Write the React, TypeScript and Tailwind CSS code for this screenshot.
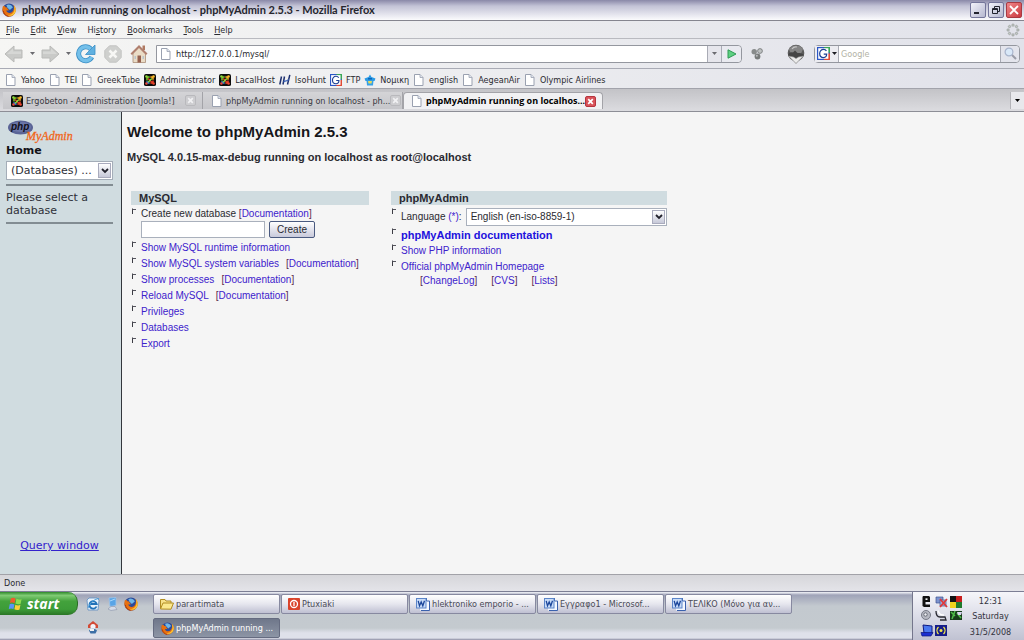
import type { ReactNode } from "react";

/* ---------- icons ---------- */

function Firefox({ className }: { className: string }) {
  return (
    <svg viewBox="0 0 16 16" className={className} aria-hidden="true">
      <circle cx="8" cy="8" r="7.500" fill="#2b4a9a" />
      <path d="M5 2.200a6 6 0 0 1 7.500 2.600L9 8 6 5z" fill="#6fb6e6" />
      <path
        d="M1.200 3C.1 6 0 9.500 2 12.400 4 15.300 7.500 16.200 10.500 15.200 14.500 13.800 16.500 9.500 15.300 5.500 14.900 4 14.100 3 13.200 2.300 14 4.600 13.600 6.200 13.300 7.400 12.600 10 10.500 11.600 8.200 11.400 6 11.200 4.800 9.800 5 8.400c.8.500 2.200.3 3-.4L6.300 6.600 5.900 5 4 4.800 3 3.200 2.400 4z"
        fill="#e8700f"
      />
      <path d="M13.200 2.300c1.300 2.400 1.600 6-.2 8.600-1.700 2.500-4.800 3.300-7.300 2.300 3.500 3 9.300.9 10-4.200.3-2.500-.7-5.200-2.500-6.700z" fill="#fbc534" />
      <path d="M1.500 9c.5 3 2.800 5.800 6 6.400" stroke="#a93208" strokeWidth="1" fill="none" />
    </svg>
  );
}

function Joomla() {
  return (
    <svg viewBox="0 0 16 16" className="size-3 shrink-0" aria-hidden="true">
      <rect width="16" height="16" rx="2.500" fill="#0c0c0c" />
      <path d="M4 8.500V5.500L5.500 4h2" stroke="#7ccb2c" strokeWidth="2" fill="none" />
      <path d="M8.500 4h2L12 5.500v2" stroke="#fbae25" strokeWidth="2" fill="none" />
      <path d="M12 8.500v2L10.500 12h-2" stroke="#ee4427" strokeWidth="2" fill="none" />
      <path d="M7.500 12h-2L4 10.500v-1" stroke="#3c86e0" strokeWidth="2" fill="none" />
      <path d="m5.500 6 5 5" stroke="#e23d28" strokeWidth="1.800" />
      <path d="m10.500 6-5 5" stroke="#8edb3a" strokeWidth="1.800" />
      <circle cx="3.300" cy="3.300" r="1.700" fill="#8edb3a" />
      <circle cx="12.700" cy="3.300" r="1.700" fill="#fbbf2d" />
      <circle cx="3.300" cy="12.700" r="1.700" fill="#e8483a" />
      <circle cx="12.700" cy="12.700" r="1.700" fill="#f0452d" />
    </svg>
  );
}

function Page() {
  return (
    <svg viewBox="0 0 12 12" className="size-3 shrink-0" aria-hidden="true">
      <path d="M1.500.5h5.500l3 3v8h-8.500z" fill="#fff" stroke="#9aa1b0" />
      <path d="M7 .5v3h3" fill="#dfe4ee" stroke="#9aa1b0" strokeWidth=".8" />
    </svg>
  );
}

function GoogleG({ className }: { className: string }) {
  return (
    <svg viewBox="0 0 16 16" className={className} aria-hidden="true">
      <rect width="16" height="16" fill="#2a56c6" />
      <path d="M8 0h8v8z" fill="#3aa757" />
      <path d="M13.500 8H16v8H8z" fill="#e04a35" />
      <rect x="1.500" y="1.500" width="12.500" height="13" fill="#fff" />
      <path d="M11.600 5C10.800 3.600 9.500 3 8 3 5.300 3 3.300 5.200 3.300 8s2 5 4.700 5c2.400 0 3.900-1.600 3.900-4.300H8.300" fill="none" stroke="#1c3f94" strokeWidth="1.500" />
    </svg>
  );
}

function IsoHunt() {
  return (
    <svg viewBox="0 0 12 12" className="size-3 shrink-0" aria-hidden="true">
      <path d="M2.500 2.500.8 10.500M5.500 2.500 4 10.500M10.800.8 8.500 10.500" stroke="#1c2f6e" strokeWidth="1.500" fill="none" />
      <path d="M4.500 7.500c2-.3 4-.8 5.500-2" stroke="#3b63b8" strokeWidth="1.300" fill="none" />
    </svg>
  );
}

function School() {
  return (
    <svg viewBox="0 0 12 12" className="size-3 shrink-0" aria-hidden="true">
      <path d="M6 .5 7.500 3 11.500 4.500 10.500 7H1.500L.5 4.500 4.500 3z" fill="#2a9be6" />
      <path d="M2.500 6.500h7l-.5 5H3z" fill="#35a0e8" />
      <path d="M4 7h4l-.5 2.500h-3z" fill="#e6d95a" />
      <path d="M4 4h4v1.500H4z" fill="#0f63b5" />
    </svg>
  );
}

function Word() {
  return (
    <svg viewBox="0 0 14 14" className="size-[14px] shrink-0" aria-hidden="true">
      <path d="M4 1h6.500l3 3v9.500H4z" fill="#f4f8ff" />
      <path d="M10.500 1v3h3v9.500H5" stroke="#3a61ad" fill="none" />
      <rect x=".5" y="1.500" width="9.500" height="9.500" fill="#c9dcf8" stroke="#5b84c8" />
      <path d="m2.200 3.800 1.300 5L5.200 5l1.600 3.800L8.500 3.800" stroke="#1d479b" strokeWidth="1.300" fill="none" />
    </svg>
  );
}

function Folder() {
  return (
    <svg viewBox="0 0 14 12" className="h-3 w-[14px] shrink-0" aria-hidden="true">
      <path d="M.5 10.500v-9h4.500l1 1.500h5v2" fill="#f7e28a" stroke="#b08c22" />
      <path d="M.5 11 3 5h10.500L11 11.200z" fill="#fbe98f" stroke="#b08c22" />
    </svg>
  );
}

function PowerPoint() {
  return (
    <svg viewBox="0 0 12 12" className="size-3 shrink-0" aria-hidden="true">
      <rect width="12" height="12" rx="1" fill="#d9432a" />
      <circle cx="6" cy="6" r="3.500" fill="none" stroke="#fff" strokeWidth="1.300" />
      <path d="M6 4v4" stroke="#fff" strokeWidth="1.300" />
    </svg>
  );
}

function NavArrow({ flip = false }: { flip?: boolean }) {
  return (
    <svg viewBox="0 0 20 18" className={flip ? "h-[18px] w-5 -scale-x-100" : "h-[18px] w-5"} aria-hidden="true">
      <path d="M1 9 10 1v4h8v8h-8v4z" fill="#c9cac8" stroke="#b9bab8" strokeLinejoin="round" />
      <path d="M3 9l6-5.500V6.500h8V9z" fill="#d6d7d5" />
    </svg>
  );
}

function Caret() {
  return (
    <svg viewBox="0 0 5 3" className="h-[3px] w-[5px]" aria-hidden="true">
      <path d="M0 0h5L2.500 3z" fill="currentColor" />
    </svg>
  );
}

function Reload() {
  return (
    <svg viewBox="0 0 20 20" className="size-5" aria-hidden="true">
      <path d="M15.800 13a7 7 0 1 1-1-8" fill="none" stroke="#3b8fc6" strokeWidth="5" />
      <path d="M15.800 13a7 7 0 1 1-1-8" fill="none" stroke="#74c0ea" strokeWidth="3.400" />
      <path d="M19 1v9.500h-9.500z" fill="#5fb0e0" stroke="#3b8fc6" strokeWidth=".8" />
    </svg>
  );
}

function Stop() {
  return (
    <svg viewBox="0 0 18 18" className="size-[18px]" aria-hidden="true">
      <path d="M5.500.8h7l4.700 4.700v7l-4.700 4.700h-7L.8 12.500v-7z" fill="#cfd0ce" stroke="#c3c4c2" />
      <path d="m5.500 5.500 7 7m0-7-7 7" stroke="#f7f7f5" strokeWidth="2.500" />
    </svg>
  );
}

function House() {
  return (
    <svg viewBox="0 0 18 19" className="h-[19px] w-[18px]" aria-hidden="true">
      <path d="M12.500 1.500h2.500V6h-2.500z" fill="#b07a62" />
      <path d="M3 9v9.500h12.500V9L9 3z" fill="#eadcc6" stroke="#a98e78" strokeWidth=".8" />
      <path d="M9 1 .5 9.500 2 11l7-7 7 7 1.500-1.500z" fill="#b07f6e" />
      <path d="M7.500 11.500h3.500v7H7.500z" fill="#96604e" />
      <path d="M4.500 12h1.500v3H4.500zM12.500 12H14v3h-1.500z" fill="#b8c4cc" />
    </svg>
  );
}

function Throbber() {
  const dots = [0, 45, 90, 135, 180, 225, 270, 315];
  return (
    <svg viewBox="-7 -7 14 14" className="size-[14px]" aria-hidden="true">
      {dots.map((a) => (
        <circle key={a} cx="0" cy="-4.900" r="1.200" fill="#c2c8c4" stroke="#8f9592" strokeWidth=".6" transform={`rotate(${a})`} />
      ))}
    </svg>
  );
}

function Helmet() {
  return (
    <svg viewBox="0 0 18 20" className="h-5 w-[18px]" aria-hidden="true">
      <circle cx="9" cy="9" r="8.300" fill="#5b5b5b" />
      <path d="M2 5.500A8.300 8.300 0 0 1 16 5l-2 4.500H4z" fill="#858585" />
      <path d="M1 11c1-2.500 3-3 5-2.500l2-2 2.500 2.500c3 0 5 .5 6.500 2L9 19.500z" fill="#454545" />
      <path d="m1.500 12 5 1 2.500 1.500 2.500-1.500 5-1L9 19.500z" fill="#ececec" stroke="#8a8a8a" strokeWidth=".6" />
      <path d="M5 5c1-1.500 3-2.500 5-2" stroke="#c5c5c5" strokeWidth="1.200" fill="none" />
    </svg>
  );
}

function Balls() {
  return (
    <svg viewBox="0 0 12 12" className="size-3" aria-hidden="true">
      <circle cx="3.200" cy="3.800" r="2.700" fill="#888b8b" />
      <circle cx="9" cy="3" r="2.400" fill="#bfc2c2" stroke="#707373" strokeWidth=".8" />
      <circle cx="6.500" cy="8.500" r="2.900" fill="#777a7a" />
      <circle cx="5.800" cy="7.800" r="1" fill="#b9bcbc" />
    </svg>
  );
}

function Magnifier() {
  return (
    <svg viewBox="0 0 13 13" className="size-[13px]" aria-hidden="true">
      <path d="m7.500 7.500 4.500 4.500" stroke="#9a9ca8" strokeWidth="2" />
      <circle cx="5" cy="5" r="3.900" fill="#d9e8f8" stroke="#a8b4cc" strokeWidth="1.200" />
    </svg>
  );
}

function TabClose({ active = false }: { active?: boolean }) {
  return (
    <svg viewBox="0 0 11 11" className="size-[11px]" aria-hidden="true">
      <rect x=".5" y=".5" width="10" height="10" rx="1.500" fill={active ? "#d9535a" : "#cdcdd0"} stroke={active ? "#b5343e" : "#b9b9bd"} />
      <path d="m3.200 3.200 4.600 4.600m0-4.600L3.200 7.800" stroke={active ? "#fff" : "#f1f1f3"} strokeWidth="1.700" />
    </svg>
  );
}

function Bullet() {
  return (
    <svg viewBox="0 0 6 6" className="mt-px size-[6px] shrink-0" aria-hidden="true">
      <path d="M1.500.5v5.500" stroke="#3c3c44" strokeWidth="1" fill="none" />
      <path d="M1.500 1.500h3.500" stroke="#55555e" strokeWidth="1" fill="none" />
    </svg>
  );
}

function PmaLogo() {
  return (
    <svg viewBox="0 0 70 24" className="h-6 w-[70px]" role="img" aria-label="phpMyAdmin">
      <ellipse cx="14.500" cy="7.500" rx="12.500" ry="7" fill="#5a6496" />
      <ellipse cx="14.500" cy="7" rx="10.500" ry="5" fill="#6b76a8" />
      <text x="5" y="10" fontSize="10" fontStyle="italic" fontWeight="bold" fontFamily="'Liberation Sans', sans-serif" fill="#10101c">php</text>
      <text x="20" y="20" fontSize="12" fontStyle="italic" fontFamily="'Liberation Serif', serif" fill="#f0661a" stroke="#f0661a" strokeWidth=".3">MyAdmin</text>
    </svg>
  );
}

function WindowsFlag() {
  return (
    <svg viewBox="0 0 16 15" className="h-[14px] w-[15px]" aria-hidden="true">
      <path d="M3 1.500c2-1 3.500-.8 5 .3L7 6.800c-1.500-1-3-1-5-.3z" fill="#ee5b2b" />
      <path d="M9 2c2 1 3.500 1 5.500.2L13.500 7.200c-2 .8-3.500.7-5.500-.2z" fill="#8fdc50" />
      <path d="M1.800 7.700c2-.8 3.500-.7 5 .3l-1 5c-1.500-1-3-1-5-.2z" fill="#5b94f8" />
      <path d="M7.800 8.200c2 1 3.500 1 5.500.2l-1 5c-2 .8-3.500.7-5.500-.2z" fill="#fbcf3b" />
    </svg>
  );
}

function Explorer() {
  return (
    <svg viewBox="0 0 14 14" className="size-[14px]" aria-hidden="true">
      <path d="M3 1h8l2 2-1 10H2L1 3z" fill="#e8f2fb" stroke="#5b8cc0" strokeWidth=".8" />
      <path d="M10.500 9.500A3.700 3.700 0 1 1 10.700 7H4.500" fill="none" stroke="#2272b8" strokeWidth="1.800" />
      <path d="M2 11C4 5 9 2 13 1.500" stroke="#4aa0dc" strokeWidth="1" fill="none" />
    </svg>
  );
}

function Desktop() {
  return (
    <svg viewBox="0 0 12 14" className="h-[14px] w-3" aria-hidden="true">
      <path d="M3 1 10 .5v8L4 9.500z" fill="#58a4e6" stroke="#9fc4e8" strokeWidth=".8" />
      <path d="M5 9.500h4l2 3-6 1-3-1.500z" fill="#d5dbe8" stroke="#8a93aa" strokeWidth=".6" />
      <path d="M4 4 9 2" stroke="#a9d8fb" />
    </svg>
  );
}

function Messenger() {
  return (
    <svg viewBox="0 0 12 14" className="h-[14px] w-3" aria-hidden="true">
      <path d="M1 5 6 1l5 4v3H1z" fill="#d24a35" />
      <circle cx="6" cy="6.500" r="2.600" fill="#f2f5fa" />
      <path d="M2 10.500c2-2.500 6-2.500 8 0l-1.500 3h-5z" fill="#3d6fa6" />
      <path d="M3 9h4v2H3z" fill="#f3f3f3" />
    </svg>
  );
}

/* ---------- data ---------- */

const menus = [
  ["", "F", "ile"],
  ["", "E", "dit"],
  ["", "V", "iew"],
  ["Hi", "s", "tory"],
  ["", "B", "ookmarks"],
  ["", "T", "ools"],
  ["", "H", "elp"],
];

const bookmarks: { label: string; icon: ReactNode }[] = [
  { label: "Yahoo", icon: <Page /> },
  { label: "TEI", icon: <Page /> },
  { label: "GreekTube", icon: <Page /> },
  { label: "Administrator", icon: <Joomla /> },
  { label: "LacalHost", icon: <Joomla /> },
  { label: "IsoHunt", icon: <IsoHunt /> },
  { label: "FTP", icon: <GoogleG className="size-3 shrink-0" /> },
  { label: "Νομικη", icon: <School /> },
  { label: "english", icon: <Page /> },
  { label: "AegeanAir", icon: <Page /> },
  { label: "Olympic Airlines", icon: <Page /> },
];

const tasks: { label: string; icon: ReactNode; active?: boolean }[] = [
  { label: "parartimata", icon: <Folder /> },
  { label: "Ptuxiaki", icon: <PowerPoint /> },
  { label: "hlektroniko emporio - ...", icon: <Word /> },
  { label: "Εγγραφο1 - Microsof...", icon: <Word /> },
  { label: "ΤΕΛΙΚΟ (Μόνο για αν...", icon: <Word /> },
  { label: "phpMyAdmin running ...", icon: <Firefox className="size-[13px] shrink-0" />, active: true },
];

const serverLinks: { label: string; doc?: boolean }[] = [
  { label: "Show MySQL runtime information" },
  { label: "Show MySQL system variables", doc: true },
  { label: "Show processes", doc: true },
  { label: "Reload MySQL", doc: true },
  { label: "Privileges" },
  { label: "Databases" },
  { label: "Export" },
];

/* ---------- small parts ---------- */

function DocLink({ children }: { children: ReactNode }) {
  return (
    <span className="text-[#5a2a4c]">
      [<a href="#doc" className="text-[#3d22cc]">{children}</a>]
    </span>
  );
}

function SelectArrow() {
  return (
    <span className="pointer-events-none absolute inset-y-[2px] right-[2px] flex w-[13px] items-center justify-center border border-[#a9abbd] bg-gradient-to-b from-white to-[#c6c8d8]">
      <svg viewBox="0 0 8 6" className="h-[6px] w-2" aria-hidden="true">
        <path d="m1 1 3 3 3-3" stroke="#22222c" strokeWidth="1.800" fill="none" />
      </svg>
    </span>
  );
}

function Tab({ icon, label, active = false }: { icon: ReactNode; label: string; active?: boolean }) {
  return (
    <div
      className={
        active
          ? "flex w-[200px] items-center rounded-t-sm border border-b-0 border-[#a3a3a8] bg-[#f1f1f3] pr-[6px] pl-[7px] font-['Open_Sans',sans-serif] font-bold text-black"
          : "flex w-[200px] items-center border-r border-[#a3a3a8] bg-gradient-to-b from-[#d4d4d7] to-[#c6c6ca] pr-[6px] pl-[8px] text-[#3a3a42]"
      }
    >
      <button type="button" className="flex flex-1 items-center gap-[3px] text-left whitespace-nowrap">
        {icon}
        {label}
      </button>
      <button type="button" aria-label="Close tab">
        <TabClose active={active} />
      </button>
    </div>
  );
}

const windowButton = "flex h-4 w-4 items-center justify-center rounded-[2px] border border-[#74769a] bg-gradient-to-br from-[#f3f3fa] to-[#b6b8d0]";

/* ---------- page ---------- */

export default function App() {
  return (
    <div className="flex min-h-screen flex-col bg-[#f5f5f5] font-['DejaVu_Sans_Condensed','DejaVu_Sans',sans-serif] text-[9px] leading-3 text-[#2a2a30]">
      {/* title bar */}
      <header className="flex h-[21px] items-center border-b border-[#85858f] bg-gradient-to-b from-[#8a89a8] via-[#c3c3d6] via-30% to-[#fbfbfd] pr-[2px] pl-[2px]">
        <Firefox className="size-[14px]" />
        <h1 className="ml-[6px] flex-1 truncate font-['Lato',sans-serif] text-[11px] leading-4 font-bold text-[#26262e]">
          phpMyAdmin running on localhost - phpMyAdmin 2.5.3 - Mozilla Firefox
        </h1>
        <div className="flex gap-[2px]">
          <button type="button" aria-label="Minimize" className={windowButton}>
            <svg viewBox="0 0 10 10" className="size-[10px]"><path d="M1 8h5" stroke="#22242e" strokeWidth="2" /></svg>
          </button>
          <button type="button" aria-label="Restore" className={windowButton}>
            <svg viewBox="0 0 10 10" className="size-[10px]" fill="none" stroke="#22242e"><path d="M3.500 3.500v-2h5v5h-2M1.500 3.500h5v5h-5zM1.500 4.500h5" /></svg>
          </button>
          <button type="button" aria-label="Close" className="flex size-4 items-center justify-center rounded-[2px] border border-[#a83a42] bg-gradient-to-br from-[#f0868a] to-[#c93740]">
            <svg viewBox="0 0 10 10" className="size-[10px]"><path d="m1 1 8 8m0-8L1 9" stroke="#fff" strokeWidth="1.800" /></svg>
          </button>
        </div>
      </header>

      {/* menu bar */}
      <nav className="flex h-[18px] items-center border-b border-[#b9bac0] bg-gradient-to-r from-[#f6f6f4] to-[#e1e2ea] pr-1 pl-[6px]">
        <div className="flex flex-1 gap-[11px]">
          {menus.map(([pre, key, post]) => (
            <button type="button" key={key}>
              {pre}
              <span className="underline">{key}</span>
              {post}
            </button>
          ))}
        </div>
        <Throbber />
      </nav>

      {/* navigation bar */}
      <div className="flex h-[30px] items-center border-b border-[#a9abb5] bg-gradient-to-r from-[#f6f6f4] to-[#e1e2ea] pr-1 pl-1 text-[#6b6b70]">
        <button type="button" aria-label="Back"><NavArrow /></button>
        <button type="button" aria-label="Back history" className="flex w-4 justify-center"><Caret /></button>
        <button type="button" aria-label="Forward"><NavArrow flip /></button>
        <button type="button" aria-label="Forward history" className="flex w-4 justify-center"><Caret /></button>
        <div className="flex items-center gap-2">
          <button type="button" aria-label="Reload"><Reload /></button>
          <button type="button" aria-label="Stop"><Stop /></button>
          <button type="button" aria-label="Home"><House /></button>
        </div>
        <div className="ml-2 flex h-[18px] flex-1 rounded-r-sm border border-[#94979f] bg-white">
          <label className="flex flex-1 items-center gap-1 pl-[3px]">
            <Page />
            <input type="text" aria-label="Address" defaultValue="http://127.0.0.1/mysql/" className="w-full bg-transparent text-[9px] text-[#2a2a30] outline-none" />
          </label>
          <button type="button" aria-label="Address history" className="flex w-[14px] items-center justify-center border-l border-[#a9abb5] bg-[#e6e6ec]"><Caret /></button>
          <button type="button" aria-label="Go" className="flex w-5 items-center justify-center rounded-r-sm border-l border-[#a9abb5] bg-[#e9eaf0]">
            <svg viewBox="0 0 10 10" className="size-[10px]"><path d="M1 .8 9 5 1 9.200z" fill="#5fd083" stroke="#2f9a55" strokeLinejoin="round" /></svg>
          </button>
        </div>
        <button type="button" aria-label="Add-on" className="ml-[9px]"><Balls /></button>
        <button type="button" aria-label="Profile" className="ml-6"><Helmet /></button>
        <div className="ml-[9px] flex h-[18px] rounded-sm border border-[#94979f] bg-white">
          <button type="button" aria-label="Search engine" className="flex w-6 items-center justify-center gap-[2px] border-r border-[#a9abb5] bg-[#ececf1] text-[#1c1c22]">
            <GoogleG className="size-[13px] shrink-0" />
            <Caret />
          </button>
          <input type="text" aria-label="Search" placeholder="Google" className="w-[161px] bg-transparent pl-[2px] text-[9px] outline-none placeholder:text-[#b3b3a6]" />
          <button type="button" aria-label="Search the web" className="flex w-[19px] items-center justify-center rounded-r-sm border-l border-[#a9abb5] bg-[#e3e4ec]"><Magnifier /></button>
        </div>
      </div>

      {/* bookmarks */}
      <nav className="flex h-5 items-center gap-1 border-b border-[#a2a3ab] bg-gradient-to-r from-[#f6f6f4] to-[#e1e2ea] pt-[2px] pl-[5px]">
        {bookmarks.map((b) => (
          <a key={b.label} href="#bookmark" className="flex items-center gap-1 whitespace-nowrap">
            {b.icon}
            {b.label}
          </a>
        ))}
      </nav>

      {/* tabs */}
      <div className="flex h-[23px] border-b border-[#8d8e96] bg-gradient-to-b from-[#c3c3c7] to-[#dcdce0] pt-[3px] pb-[2px] pl-[3px]">
        <Tab icon={<Joomla />} label="Ergobeton - Administration [Joomla!]" />
        <Tab icon={<Page />} label="phpMyAdmin running on localhost - ph..." />
        <Tab icon={<Page />} label="phpMyAdmin running on localhos..." active />
        <button type="button" aria-label="List all tabs" className="ml-auto flex w-[14px] items-center justify-center border-l border-[#b3b3b8] bg-[#e8e8ec] text-black"><Caret /></button>
      </div>

      {/* page frames */}
      <div className="flex flex-1">
        <aside className="flex w-[122px] flex-col border-r border-[#33363c] bg-[#d0dce0] pt-2 pr-2 pl-[6px] font-['DejaVu_Sans',sans-serif] text-[11px] leading-[13px] text-[#2e3038]">
          <PmaLogo />
          <a href="#home" className="font-bold text-[#111116]">Home</a>
          <div className="relative mt-1">
            <select aria-label="Database" className="block h-[19px] w-full appearance-none border border-[#a4adb8] bg-white pl-1 text-[11px]">
              <option>(Databases) ...</option>
            </select>
            <SelectArrow />
          </div>
          <hr className="mt-[4px] border-t-2 border-[#828c92]" />
          <p className="my-[5px]">Please select a database</p>
          <hr className="border-t-2 border-[#828c92]" />
          <a href="#query" className="mt-auto mb-[22px] text-center text-[#3322cc] underline">Query window</a>
        </aside>

        <main className="flex-1 px-[5px] pt-[10px] font-['Liberation_Sans',sans-serif] text-[10px] leading-4">
          <h2 className="text-[15px] leading-5 font-bold text-[#16161a]">Welcome to phpMyAdmin 2.5.3</h2>
          <p className="mt-[7px] text-[11px] font-bold">MySQL 4.0.15-max-debug running on localhost as root@localhost</p>

          <div className="mt-[26px] ml-1 flex items-start gap-[22px]">
            <section className="w-[238px]">
              <h3 className="mb-[2px] bg-[#d0dce0] pl-2 text-[11px] leading-[14px] font-bold">MySQL</h3>
              <ul>
                <li className="flex h-[33px] gap-1">
                  <Bullet />
                  <form onSubmit={(e) => e.preventDefault()}>
                    <label htmlFor="new-db" className="block leading-[14px]">
                      Create new database <DocLink>Documentation</DocLink>
                    </label>
                    <div className="flex gap-1">
                      <input id="new-db" type="text" className="h-[17px] w-[124px] border border-[#a9b0bc] bg-white px-1" />
                      <button type="submit" className="h-[17px] w-[46px] rounded-[2px] border border-[#4a5a80] bg-gradient-to-b from-white to-[#c9cadb] leading-[14px]">Create</button>
                    </div>
                  </form>
                </li>
                {serverLinks.map((l) => (
                  <li key={l.label} className="flex gap-1">
                    <Bullet />
                    <span className="whitespace-nowrap">
                      <a href="#action" className="text-[#3d22cc]">{l.label}</a>
                      {l.doc && <span className="ml-[7px]"><DocLink>Documentation</DocLink></span>}
                    </span>
                  </li>
                ))}
              </ul>
            </section>

            <section className="w-[276px]">
              <h3 className="mb-[2px] bg-[#d0dce0] pl-2 text-[11px] leading-[14px] font-bold">phpMyAdmin</h3>
              <ul>
                <li className="flex h-5 gap-1">
                  <Bullet />
                  <div className="flex flex-1 items-center gap-1">
                    <label htmlFor="lang" className="whitespace-nowrap">
                      Language <span className="text-[#3d22cc]">(*)</span>:
                    </label>
                    <div className="relative flex-1">
                      <select id="lang" className="block h-[18px] w-full appearance-none border border-[#a9b0bc] bg-white pl-1 text-[10px]">
                        <option>English (en-iso-8859-1)</option>
                      </select>
                      <SelectArrow />
                    </div>
                  </div>
                </li>
                <li className="flex gap-1">
                  <Bullet />
                  <a href="#manual" className="text-[11px] font-bold text-[#2211dd]">phpMyAdmin documentation</a>
                </li>
                <li className="flex gap-1">
                  <Bullet />
                  <a href="#phpinfo" className="text-[#3d22cc]">Show PHP information</a>
                </li>
                <li className="flex gap-1">
                  <Bullet />
                  <div>
                    <a href="#homepage" className="text-[#3d22cc]">Official phpMyAdmin Homepage</a>
                    <div className="ml-[19px] flex gap-[14px] leading-[11px]">
                      <DocLink>ChangeLog</DocLink>
                      <DocLink>CVS</DocLink>
                      <DocLink>Lists</DocLink>
                    </div>
                  </div>
                </li>
              </ul>
            </section>
          </div>
        </main>
      </div>

      {/* status bar */}
      <footer className="flex h-[17px] items-center border-t border-[#a2a2a8] bg-gradient-to-b from-[#d6d6da] to-[#e4e4e9] pl-1">Done</footer>

      {/* taskbar */}
      <div className="flex h-[49px] border-t border-[#7c7e94] bg-[linear-gradient(#f4f5fa_0px,#9fa3b8_3px,#c3c9cf_14px,#c4cacf_36px,#dfe1ea_41px,#dfe1ea_46px,#8b8ca2_48px)]">
        <button
          type="button"
          className="flex h-[23px] w-[78px] items-center gap-1 rounded-r-[10px] border-r border-[#2b6e24] bg-[linear-gradient(#2f8a2b,#7fcb74_15%,#43a23c_40%,#3d9c38_75%,#2a7525)] pl-2 font-['Open_Sans',sans-serif] text-[14px] leading-4 font-bold text-white italic"
        >
          <WindowsFlag />
          start
        </button>
        <div className="ml-[6px] grid w-[56px] grid-cols-3 grid-rows-2 place-items-center pb-px">
          <button type="button" aria-label="Internet Explorer"><Explorer /></button>
          <button type="button" aria-label="Show desktop"><Desktop /></button>
          <button type="button" aria-label="Firefox"><Firefox className="size-[14px]" /></button>
          <button type="button" aria-label="Messenger"><Messenger /></button>
        </div>
        <div className="ml-[13px] grid grid-cols-[repeat(5,127px)] grid-rows-[20px_20px] gap-x-px gap-y-1 pt-[2px]">
          {tasks.map((t) => (
            <button
              type="button"
              key={t.label}
              className={
                t.active
                  ? "flex items-center gap-[2px] rounded-[2px] border border-[#656b80] bg-gradient-to-b from-[#6f778a] to-[#8d95a5] pl-[7px] whitespace-nowrap text-white"
                  : "flex items-center gap-[2px] rounded-[2px] border border-[#8789a0] bg-gradient-to-b from-white via-[#e6e6ee] to-[#bfc0d2] pl-[6px] whitespace-nowrap text-[#4a4a56]"
              }
            >
              {t.icon}
              {t.label}
            </button>
          ))}
        </div>
        <div className="ml-auto flex w-[112px] border-l border-[#74768c] bg-gradient-to-b from-[#f6f6fa] via-[#dcdde8] to-[#c0c2d2] pl-[7px]">
          <svg viewBox="0 0 45 45" className="mt-[2px] size-[45px] shrink-0" role="img" aria-label="Notification icons">
            <path d="M3 2h6l1 1v5H5.500v2.500H10V13H4l-1.500-1V3z" fill="#111" />
            <path d="M5.500 4.300h2v1.700h-2z" fill="#eee" />
            <path d="M16 3h7v6h-7z" fill="#7b93cf" stroke="#40558f" strokeWidth=".7" />
            <path d="M20 6h6v6h-6z" fill="#9fb0dc" stroke="#40558f" strokeWidth=".7" />
            <path d="m20 5 7 8m0-8-7 8" stroke="#e03838" strokeWidth="1.800" />
            <path d="M30 2h6v6h-6z" fill="#111" />
            <path d="M36 2h6v6h-6z" fill="#c81e1e" />
            <path d="M30 8h6v6h-6z" fill="#f0d21e" />
            <path d="M36 8h6v6h-6z" fill="#1f7a2c" />
            <circle cx="6" cy="21" r="4.500" fill="#b6b8c2" stroke="#777a86" />
            <circle cx="5.500" cy="20.500" r="1.700" fill="#f0f0f4" stroke="#666975" />
            <path d="M16 17c0 4 1 6 4 6h5l1 3h-6" fill="none" stroke="#2b2b33" strokeWidth="1.300" />
            <path d="M18 16.500c1 3 2 5 6 4.500" stroke="#fff" strokeWidth="1.500" fill="none" />
            <path d="M30 17h12v9H30z" fill="#173c1a" />
            <path d="m31 18 4 4m0-5-3 8m5-6 4 5" stroke="#4fbd4a" strokeWidth="1.500" />
            <path d="M37 18h5l-1 3h-3z" fill="#d9d2f0" />
            <path d="m3 31 9 1v8l-8-1z" fill="#4a78f0" stroke="#0e1880" />
            <path d="M1 38.500h12l-2 3.500H2z" fill="#1b2fd0" stroke="#0e1880" strokeWidth=".7" />
            <path d="M15 31h12v11H15z" fill="#151c8a" />
            <path d="M18.500 33c-2 2-2 5 0 7m5-7c2 2 2 5 0 7" stroke="#f2e84a" strokeWidth="1.300" fill="none" />
            <circle cx="21" cy="36.500" r="1.500" fill="#f2e84a" />
          </svg>
          <div className="flex flex-1 flex-col items-center justify-around pt-px pr-2 text-[#33333d]">
            <span>12:31</span>
            <span>Saturday</span>
            <span>31/5/2008</span>
          </div>
        </div>
      </div>
    </div>
  );
}
